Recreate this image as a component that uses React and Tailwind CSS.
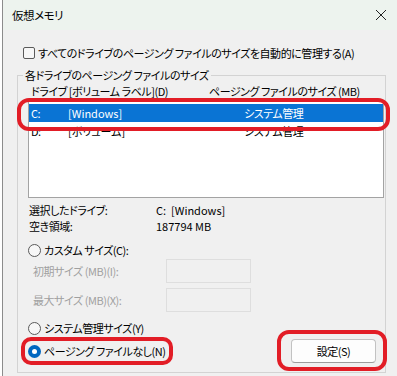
import React from 'react';

const font = "font-['Noto_Sans_CJK_JP',sans-serif] [font-feature-settings:'palt']";

const Radio = ({ checked }) =>
  checked ? (
    <span className="flex h-[13px] w-[13px] shrink-0 items-center justify-center rounded-full bg-[#0067c0]">
      <span className="h-[5px] w-[5px] rounded-full bg-white" />
    </span>
  ) : (
    <span className="h-[13px] w-[13px] shrink-0 rounded-full border border-[#5a5a5a] bg-[#f7f7f7]" />
  );

const drives = [
  { drive: 'C:', label: '[Windows]', size: 'システム管理', selected: true },
  { drive: 'D:', label: '[ボリューム]', size: 'システム管理' },
];

export default function App() {
  return (
    <div className={`relative h-[376px] w-[397px] overflow-hidden whitespace-pre bg-white pl-[2px] text-[11px] leading-[16px] tracking-[-0.45px] text-black ${font}`}>
      <div className="flex h-full flex-col border-l border-[#8c8c8c] bg-[#f0f0f0]">
        {/* title bar */}
        <div className="flex h-[30px] shrink-0 items-center justify-between bg-[#edf3ee] pl-[9px] pr-[9px]">
          <span className="text-[11.5px]">仮想メモリ</span>
          <svg width="12" height="12" viewBox="0 0 12 12" className="mr-[1px]">
            <path d="M1 1 L11 11 M11 1 L1 11" stroke="#222" strokeWidth="1" fill="none" />
          </svg>
        </div>

        {/* auto manage checkbox */}
        <div className="mt-[16px] flex h-[14px] items-center pl-[20px]">
          <span className="h-[12px] w-[12px] shrink-0 rounded-[2px] border border-[#5a5a5a] bg-[#f7f7f7]" />
          <span className="ml-[3px]">すべてのドライブのページング ファイルのサイズを自動的に管理する(A)</span>
        </div>

        {/* group box */}
        <div className="relative ml-[14px] mt-[15px] h-[298px] w-[369px] border border-[#d3d3d3]">
          <span className="absolute -top-[9px] left-[5px] bg-[#f0f0f0] px-[2px]">各ドライブのページング ファイルのサイズ</span>

          <div className="mt-[7px] flex h-[16px] items-center pl-[13px]">
            <span className="w-[178px]">ドライブ [ボリューム ラベル](D)</span>
            <span>ページング ファイルのサイズ (MB)</span>
          </div>

          <div className="ml-[10px] mt-[2px] h-[97px] w-[356px] border border-[#a3a3a3] bg-white pt-[2px]">
            {drives.map((d) => (
              <div
                key={d.drive}
                className={`flex h-[18px] items-center pl-[2px] ${d.selected ? 'bg-[#0a74d4] text-white' : ''}`}
              >
                <span className="w-[37px]">{d.drive}</span>
                <span className="w-[176px] tracking-[0px]">{d.label}</span>
                <span>{d.size}</span>
              </div>
            ))}
          </div>

          <div className="mt-[4px] pl-[11px]">
            <div className="flex h-[16px] items-center">
              <span className="w-[127px]">選択したドライブ:</span>
              <span className="tracking-[0px]">C:  [Windows]</span>
            </div>
            <div className="flex h-[16px] items-center">
              <span className="w-[127px]">空き領域:</span>
              <span className="tracking-[0px]">187794 MB</span>
            </div>
          </div>

          <div className="mt-[8px] flex h-[16px] items-center gap-[3px] pl-[10px]">
            <Radio />
            <span>カスタム サイズ(C):</span>
          </div>

          <div className="mt-[1px] flex h-[24px] items-center pl-[15px] text-[#a0a0a0]">
            <span className="w-[133px]">初期サイズ (MB)(I):</span>
            <span className="h-[24px] w-[85px] border border-[#dedede] bg-[#f0f0f0]" />
          </div>
          <div className="mt-[5px] flex h-[24px] items-center pl-[15px] text-[#a0a0a0]">
            <span className="w-[133px]">最大サイズ (MB)(X):</span>
            <span className="h-[24px] w-[85px] border border-[#dedede] bg-[#f0f0f0]" />
          </div>

          <div className="mt-[8px] flex h-[16px] items-center gap-[3px] pl-[10px]">
            <Radio />
            <span>システム管理サイズ(Y)</span>
          </div>

          <div className="mt-[3px] flex h-[24px] items-center justify-between pl-[10px] pr-[9px]">
            <div className="flex items-center gap-[3px]">
              <Radio checked />
              <span>ページング ファイルなし(N)</span>
            </div>
            <button className="h-[24px] w-[85px] rounded-[4px] border border-[#c2c2c2] border-b-[#9c9c9c] bg-[#fdfdfd]">
              設定(S)
            </button>
          </div>
        </div>
      </div>

      {/* red annotations */}
      <div className="pointer-events-none absolute left-[17px] top-[98px] h-[33px] w-[373px] rounded-[12px] border-[4px] border-[#e21d26]" />
      <div className="pointer-events-none absolute left-[21px] top-[337px] h-[28px] w-[152px] rounded-[10px] border-[4px] border-[#e21d26]" />
      <div className="pointer-events-none absolute left-[277px] top-[330px] h-[41px] w-[110px] rounded-[12px] border-[4px] border-[#e21d26]" />
    </div>
  );
}
